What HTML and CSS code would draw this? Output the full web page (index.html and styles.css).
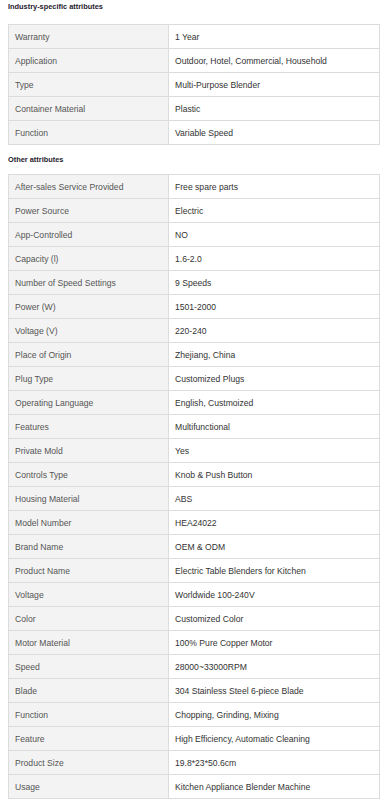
FILE: index.html
```html
<!DOCTYPE html>
<html>
<head>
<meta charset="utf-8">
<link rel="stylesheet" href="styles.css">
</head>
<body>
<div class="attrs">
  <h3 class="attrs-title">Industry-specific attributes</h3>
  <table class="attrs-table">
    <tr><td class="k">Warranty</td><td class="v">1 Year</td></tr>
    <tr><td class="k">Application</td><td class="v">Outdoor, Hotel, Commercial, Household</td></tr>
    <tr><td class="k">Type</td><td class="v">Multi-Purpose Blender</td></tr>
    <tr><td class="k">Container Material</td><td class="v">Plastic</td></tr>
    <tr><td class="k">Function</td><td class="v">Variable Speed</td></tr>
  </table>
  <h3 class="attrs-title second">Other attributes</h3>
  <table class="attrs-table">
    <tr><td class="k">After-sales Service Provided</td><td class="v">Free spare parts</td></tr>
    <tr><td class="k">Power Source</td><td class="v">Electric</td></tr>
    <tr><td class="k">App-Controlled</td><td class="v">NO</td></tr>
    <tr><td class="k">Capacity (l)</td><td class="v">1.6-2.0</td></tr>
    <tr><td class="k">Number of Speed Settings</td><td class="v">9 Speeds</td></tr>
    <tr><td class="k">Power (W)</td><td class="v">1501-2000</td></tr>
    <tr><td class="k">Voltage (V)</td><td class="v">220-240</td></tr>
    <tr><td class="k">Place of Origin</td><td class="v">Zhejiang, China</td></tr>
    <tr><td class="k">Plug Type</td><td class="v">Customized Plugs</td></tr>
    <tr><td class="k">Operating Language</td><td class="v">English, Custmoized</td></tr>
    <tr><td class="k">Features</td><td class="v">Multifunctional</td></tr>
    <tr><td class="k">Private Mold</td><td class="v">Yes</td></tr>
    <tr><td class="k">Controls Type</td><td class="v">Knob &amp; Push Button</td></tr>
    <tr><td class="k">Housing Material</td><td class="v">ABS</td></tr>
    <tr><td class="k">Model Number</td><td class="v">HEA24022</td></tr>
    <tr><td class="k">Brand Name</td><td class="v">OEM &amp; ODM</td></tr>
    <tr><td class="k">Product Name</td><td class="v">Electric Table Blenders for Kitchen</td></tr>
    <tr><td class="k">Voltage</td><td class="v">Worldwide 100-240V</td></tr>
    <tr><td class="k">Color</td><td class="v">Customized Color</td></tr>
    <tr><td class="k">Motor Material</td><td class="v">100% Pure Copper Motor</td></tr>
    <tr><td class="k">Speed</td><td class="v">28000~33000RPM</td></tr>
    <tr><td class="k">Blade</td><td class="v">304 Stainless Steel 6-piece Blade</td></tr>
    <tr><td class="k">Function</td><td class="v">Chopping, Grinding, Mixing</td></tr>
    <tr><td class="k">Feature</td><td class="v">High Efficiency, Automatic Cleaning</td></tr>
    <tr><td class="k">Product Size</td><td class="v">19.8*23*50.6cm</td></tr>
    <tr><td class="k">Usage</td><td class="v">Kitchen Appliance Blender Machine</td></tr>
  </table>
</div>
</body>
</html>
```
FILE: styles.css
```css
html, body {
  margin: 0;
  padding: 0;
  background: #fff;
}
body {
  font-family: "Liberation Sans", Arial, sans-serif;
}
.attrs {
  padding: 0 4px 0 8px;
}
.attrs-title {
  margin: 0 0 10px 0;
  font-size: 7.4px;
  line-height: 14px;
  font-weight: bold;
  color: #1f1a2e;
}
.attrs-title.second {
  margin-top: 8px;
  margin-bottom: 7px;
}
.attrs-table {
  width: 372px;
  border-collapse: collapse;
  table-layout: fixed;
}
.attrs-table td {
  border: 1px solid #dcdcdc;
  height: 24px;
  padding: 0 6px;
  font-size: 8.6px;
  box-sizing: border-box;
  white-space: nowrap;
  vertical-align: middle;
}
.attrs-table td.k {
  width: 160px;
  background: #f3f3f3;
  color: #555;
}
.attrs-table td.v {
  color: #333;
}
```
